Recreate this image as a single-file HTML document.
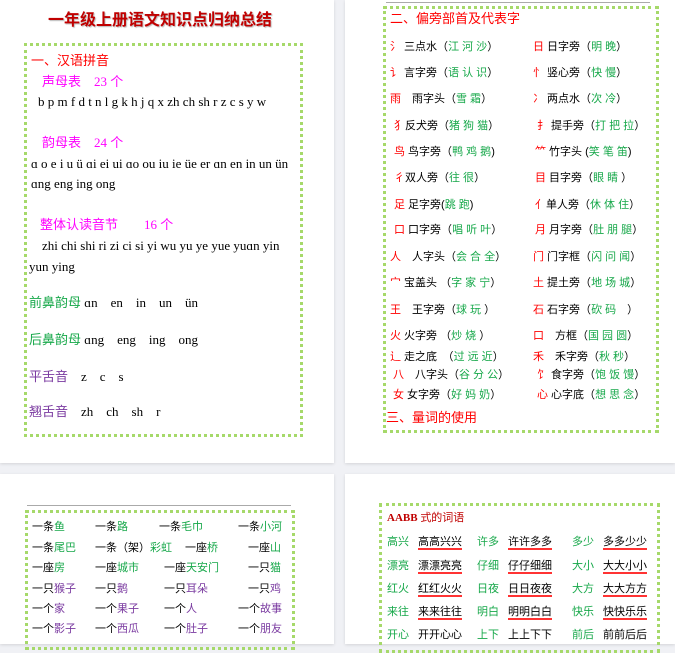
<!DOCTYPE html>
<html><head><meta charset="utf-8"><style>
*{margin:0;padding:0;box-sizing:border-box}
body{width:675px;height:637px;background:#f0f1f5;position:relative;overflow:hidden;font-family:"Liberation Serif","Noto Sans CJK SC",serif;font-size:13px;color:#000}
.pg{position:absolute;background:#fff;box-shadow:0 1px 3px rgba(0,0,0,.12)}
.box{position:absolute;border:3px dotted #a6d96a}
.a{position:absolute;white-space:nowrap;line-height:14px}
.s{font-family:"Liberation Sans","Noto Sans CJK SC",sans-serif}
.r{color:#f00}.m{color:#f0f}.g{color:#17a84a}.p{color:#7a3aa0}.dr{color:#c00000}
.u{border-bottom:2px solid #f33}
</style></head><body>
<div class="pg" style="left:0;top:0;width:334px;height:463px"></div>
<div class="pg" style="left:345px;top:0;width:330px;height:463px"></div>
<div class="pg" style="left:0;top:474px;width:334px;height:170px"></div>
<div class="pg" style="left:345px;top:474px;width:330px;height:170px"></div>

<div class="a s dr" style="left:48px;top:12px;font-size:16px;font-weight:bold;line-height:18px;text-shadow:1px 1px 1px #bbb">一年级上册语文知识点归纳总结</div>
<div class="box" style="left:24px;top:43px;width:279px;height:394px"></div>
<div class="a s r" style="left:31px;top:54px;font-size:13px">一、汉语拼音</div>
<div class="a m" style="left:42px;top:75px">声母表　23 个</div>
<div class="a" style="left:38px;top:95px">b p m f d t n l g k h j q x zh ch sh r z c s y w</div>
<div class="a m" style="left:42px;top:136px">韵母表　24 个</div>
<div class="a" style="left:31px;top:157px">ɑ o e i u ü ɑi ei ui ɑo ou iu ie üe er ɑn en in un ün</div>
<div class="a" style="left:31px;top:177px">ɑng eng ing ong</div>
<div class="a m" style="left:40px;top:218px">整体认读音节　　16 个</div>
<div class="a" style="left:42px;top:239px">zhi chi shi ri zi ci si yi wu yu ye yue yuɑn yin</div>
<div class="a" style="left:29px;top:260px">yun ying</div>
<div class="a" style="left:29px;top:296px"><span class="g">前鼻韵母</span> ɑn　en　in　un　ün</div>
<div class="a" style="left:29px;top:333px"><span class="g">后鼻韵母</span> ɑng　eng　ing　ong</div>
<div class="a" style="left:29px;top:370px"><span class="p">平舌音</span>　z　c　s</div>
<div class="a" style="left:29px;top:405px"><span class="p">翘舌音</span>　zh　ch　sh　r</div>

<div style="position:absolute;left:386px;top:2px;width:264px;height:1px;background:#aaa"></div>
<div class="box" style="left:383px;top:6px;width:276px;height:427px"></div>
<div class="a s r" style="left:390px;top:12px;font-size:13px">二、偏旁部首及代表字</div>
<div class="s" style="font-size:11px">
<div class="a" style="left:390px;top:40px"><span class="r">氵</span> 三点水（<span class="g">江 河 沙</span>）</div>
<div class="a" style="left:533px;top:40px"><span class="r">日</span> 日字旁（<span class="g">明 晚</span>）</div>
<div class="a" style="left:390px;top:66px"><span class="r">讠</span> 言字旁（<span class="g">语 认 识</span>）</div>
<div class="a" style="left:533px;top:66px"><span class="r">忄</span> 竖心旁（<span class="g">快 慢</span>）</div>
<div class="a" style="left:390px;top:92px"><span class="r">雨</span>　雨字头（<span class="g">雪 霜</span>）</div>
<div class="a" style="left:533px;top:92px"><span class="r">冫</span> 两点水（<span class="g">次 冷</span>）</div>
<div class="a" style="left:394px;top:119px"><span class="r">犭</span>反犬旁（<span class="g">猪 狗 猫</span>）</div>
<div class="a" style="left:537px;top:119px"><span class="r">扌</span> 提手旁（<span class="g">打 把 拉</span>）</div>
<div class="a" style="left:394px;top:145px"><span class="r">鸟</span> 鸟字旁（<span class="g">鸭 鸡 鹅</span>)</div>
<div class="a" style="left:535px;top:145px"><span class="r">⺮</span> 竹字头 (<span class="g">笑 笔 笛</span>)</div>
<div class="a" style="left:394px;top:171px"><span class="r">彳</span>双人旁（<span class="g">往 很</span>）</div>
<div class="a" style="left:535px;top:171px"><span class="r">目</span> 目字旁（<span class="g">眼 睛</span> ）</div>
<div class="a" style="left:394px;top:198px"><span class="r">足</span> 足字旁(<span class="g">跳 跑</span>)</div>
<div class="a" style="left:535px;top:198px"><span class="r">亻</span>单人旁（<span class="g">休 体 住</span>）</div>
<div class="a" style="left:394px;top:223px"><span class="r">口</span> 口字旁（<span class="g">唱 听 叶</span>）</div>
<div class="a" style="left:535px;top:223px"><span class="r">月</span> 月字旁（<span class="g">肚 朋 腿</span>）</div>
<div class="a" style="left:390px;top:250px"><span class="r">人</span>　人字头（<span class="g">会 合 全</span>）</div>
<div class="a" style="left:533px;top:250px"><span class="r">门</span> 门字框（<span class="g">闪 问 闻</span>）</div>
<div class="a" style="left:390px;top:276px"><span class="r">宀</span> 宝盖头 （<span class="g">字 家 宁</span>）</div>
<div class="a" style="left:533px;top:276px"><span class="r">土</span> 提土旁（<span class="g">地 场 城</span>）</div>
<div class="a" style="left:390px;top:303px"><span class="r">王</span>　王字旁（<span class="g">球 玩</span> ）</div>
<div class="a" style="left:533px;top:303px"><span class="r">石</span> 石字旁（<span class="g">砍 码</span>　）</div>
<div class="a" style="left:390px;top:329px"><span class="r">火</span> 火字旁 （<span class="g">炒 烧</span> ）</div>
<div class="a" style="left:533px;top:329px"><span class="r">口</span>　方框（<span class="g">国 园 圆</span>）</div>
<div class="a" style="left:390px;top:350px"><span class="r">辶</span> 走之底　（<span class="g">过 远 近</span>）</div>
<div class="a" style="left:533px;top:350px"><span class="r">禾</span>　禾字旁（<span class="g">秋 秒</span>）</div>
<div class="a" style="left:393px;top:368px"><span class="r">八</span>　八字头（<span class="g">谷 分 公</span>）</div>
<div class="a" style="left:537px;top:368px"><span class="r">饣</span> 食字旁（<span class="g">饱 饭 馒</span>）</div>
<div class="a" style="left:393px;top:388px"><span class="r">女</span> 女字旁（<span class="g">好 妈 奶</span>）</div>
<div class="a" style="left:537px;top:388px"><span class="r">心</span> 心字底（<span class="g">想 思 念</span>）</div>
</div>
<div class="a s r" style="left:386px;top:411px;font-size:13px">三、量词的使用</div>

<div style="position:absolute;left:27px;top:505px;width:264px;height:1px;background:#aaa"></div>
<div class="box" style="left:25px;top:510px;width:270px;height:140px"></div>
<div class="s" style="font-size:11px">
<div class="a" style="left:32px;top:520px">一条<span class="g">鱼</span></div>
<div class="a" style="left:95px;top:520px">一条<span class="g">路</span></div>
<div class="a" style="left:159px;top:520px">一条<span class="g">毛巾</span></div>
<div class="a" style="left:238px;top:520px">一条<span class="g">小河</span></div>
<div class="a" style="left:32px;top:541px">一条<span class="g">尾巴</span></div>
<div class="a" style="left:95px;top:541px">一条（架）<span class="g">彩虹</span></div>
<div class="a" style="left:185px;top:541px">一座<span class="g">桥</span></div>
<div class="a" style="left:248px;top:541px">一座<span class="g">山</span></div>
<div class="a" style="left:32px;top:561px">一座<span class="g">房</span></div>
<div class="a" style="left:95px;top:561px">一座<span class="g">城市</span></div>
<div class="a" style="left:164px;top:561px">一座<span class="g">天安门</span></div>
<div class="a" style="left:248px;top:561px">一只<span class="g">猫</span></div>
<div class="a" style="left:32px;top:582px">一只<span class="p">猴子</span></div>
<div class="a" style="left:95px;top:582px">一只<span class="p">鹅</span></div>
<div class="a" style="left:164px;top:582px">一只<span class="p">耳朵</span></div>
<div class="a" style="left:248px;top:582px">一只<span class="p">鸡</span></div>
<div class="a" style="left:32px;top:602px">一个<span class="p">家</span></div>
<div class="a" style="left:95px;top:602px">一个<span class="p">果子</span></div>
<div class="a" style="left:164px;top:602px">一个<span class="p">人</span></div>
<div class="a" style="left:238px;top:602px">一个<span class="p">故事</span></div>
<div class="a" style="left:32px;top:622px">一个<span class="p">影子</span></div>
<div class="a" style="left:95px;top:622px">一个<span class="p">西瓜</span></div>
<div class="a" style="left:164px;top:622px">一个<span class="p">肚子</span></div>
<div class="a" style="left:238px;top:622px">一个<span class="p">朋友</span></div>
</div>

<div class="box" style="left:379px;top:503px;width:281px;height:150px"></div>
<div class="a dr" style="left:387px;top:511px;font-size:11px;font-weight:bold">AABB <span class="s" style="font-weight:normal">式的词语</span></div>
<div class="s" style="font-size:11px">
<div class="a g" style="left:387px;top:535px">高兴</div><div class="a" style="left:418px;top:535px"><span class="u">高高兴兴</span></div>
<div class="a g" style="left:477px;top:535px">许多</div><div class="a" style="left:508px;top:535px"><span class="u">许许多多</span></div>
<div class="a g" style="left:572px;top:535px">多少</div><div class="a" style="left:603px;top:535px"><span class="u">多多少少</span></div>
<div class="a g" style="left:387px;top:559px">漂亮</div><div class="a" style="left:418px;top:559px"><span class="u">漂漂亮亮</span></div>
<div class="a g" style="left:477px;top:559px">仔细</div><div class="a" style="left:508px;top:559px"><span class="u">仔仔细细</span></div>
<div class="a g" style="left:572px;top:559px">大小</div><div class="a" style="left:603px;top:559px"><span class="u">大大小小</span></div>
<div class="a g" style="left:387px;top:582px">红火</div><div class="a" style="left:418px;top:582px"><span class="u">红红火火</span></div>
<div class="a g" style="left:477px;top:582px">日夜</div><div class="a" style="left:508px;top:582px"><span class="u">日日夜夜</span></div>
<div class="a g" style="left:572px;top:582px">大方</div><div class="a" style="left:603px;top:582px"><span class="u">大大方方</span></div>
<div class="a g" style="left:387px;top:605px">来往</div><div class="a" style="left:418px;top:605px"><span class="u">来来往往</span></div>
<div class="a g" style="left:477px;top:605px">明白</div><div class="a" style="left:508px;top:605px"><span class="u">明明白白</span></div>
<div class="a g" style="left:572px;top:605px">快乐</div><div class="a" style="left:603px;top:605px"><span class="u">快快乐乐</span></div>
<div class="a g" style="left:387px;top:628px">开心</div><div class="a" style="left:418px;top:628px">开开心心</div>
<div class="a g" style="left:477px;top:628px">上下</div><div class="a" style="left:508px;top:628px">上上下下</div>
<div class="a g" style="left:572px;top:628px">前后</div><div class="a" style="left:603px;top:628px">前前后后</div>
</div>
</body></html>
